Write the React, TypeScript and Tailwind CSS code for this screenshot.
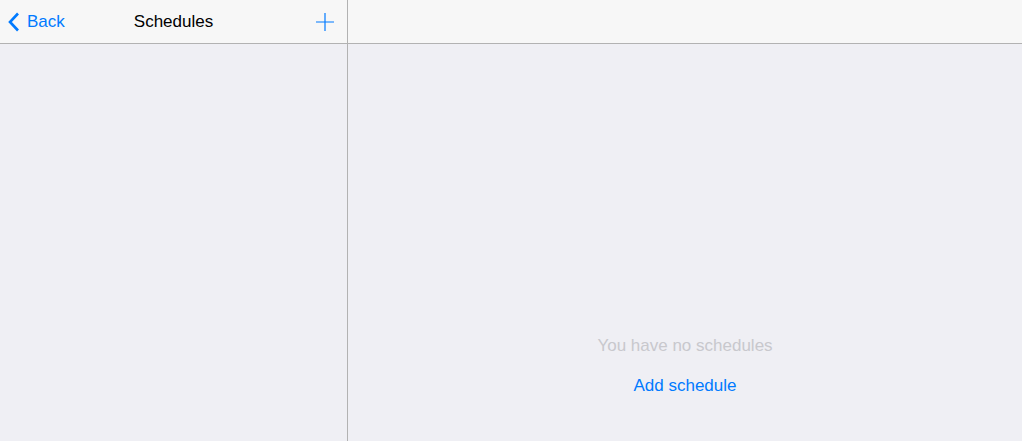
import React from "react";

export default function App() {
  const font = { fontFamily: '"Liberation Sans", Arial, sans-serif' };
  return (
    <div className="flex h-[441px] w-[1022px] bg-[#efeff4] overflow-hidden" style={font}>
      <div className="flex w-[348px] flex-col border-r border-[#b2b2b2]">
        <div className="relative flex h-[44px] items-center border-b border-[#b2b2b2] bg-[#f7f7f7]">
          <div className="flex items-center pl-[8px] text-[17px] text-[#007aff]">
            <svg width="12" height="20" viewBox="0 0 12 20" className="mr-[7px]">
              <path d="M10 1.5 L2 10 L10 18.5" fill="none" stroke="#007aff" strokeWidth="2.6" strokeLinecap="butt" strokeLinejoin="miter" />
            </svg>
            <span>Back</span>
          </div>
          <div className="absolute left-0 right-0 text-center text-[17px] text-black pointer-events-none">
            <span>Schedules</span>
          </div>
          <div className="ml-auto mr-[13px] flex items-center">
            <svg width="18" height="18" viewBox="0 0 18 18">
              <path d="M9 0 V18 M0 9 H18" stroke="#007aff" strokeWidth="1.2" />
            </svg>
          </div>
        </div>
        <div className="flex-1" />
      </div>
      <div className="flex flex-1 flex-col">
        <div className="h-[44px] border-b border-[#b2b2b2] bg-[#f7f7f7]" />
        <div className="flex flex-1 flex-col items-center pt-[292px]">
          <div className="text-[17px] leading-[20px] text-[#c8c8cd]">You have no schedules</div>
          <div className="mt-[20px] text-[17px] leading-[20px] text-[#007aff]">Add schedule</div>
        </div>
      </div>
    </div>
  );
}
